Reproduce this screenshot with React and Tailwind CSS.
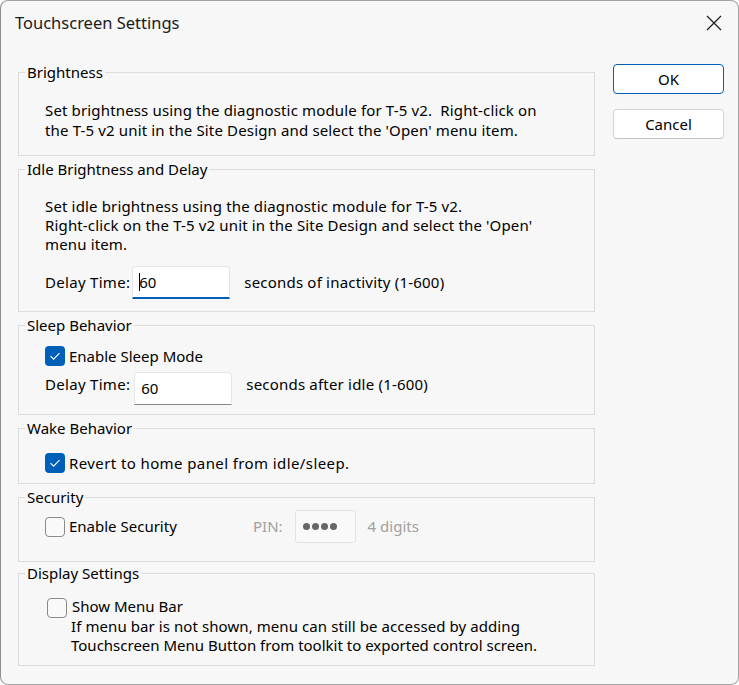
function Check({ checked, className = '' }) {
  if (checked) {
    return (
      <div className={`w-[20px] h-[20px] rounded-[4px] bg-[#005fb8] flex items-center justify-center shrink-0 ${className}`}>
        <svg width="20" height="20" viewBox="0 0 20 20">
          <path d="M5.5 10.2 L8.6 13.2 L14.5 7.2" fill="none" stroke="white" strokeWidth="1.1" />
        </svg>
      </div>
    )
  }
  return <div className={`w-[20px] h-[20px] rounded-[4px] border border-[#8a8a8a] bg-[#f9f9f9] shrink-0 ${className}`} />
}

function Group({ title, className = '', children }) {
  return (
    <fieldset className={`border border-[#dcdcdc] min-w-0 ${className}`}>
      <legend className="ml-[6px] px-[2px] leading-[20px]">{title}</legend>
      {children}
    </fieldset>
  )
}

function Field({ value, focused, className = '' }) {
  return (
    <div
      className={`h-[33px] bg-white border border-[#e5e5e5] rounded-t-[4px] flex items-center pl-[6px] leading-[20px] ${
        focused ? 'border-b-2 border-b-[#005fb8]' : 'border-b border-b-[#868686]'
      } ${className}`}
    >
      {focused && <span className="w-px h-[18px] bg-black -mr-px" />}
      {value}
    </div>
  )
}

export default function App() {
  return (
    <div className="w-[739px] h-[685px] bg-white font-['Noto_Sans',sans-serif] text-[15px] text-black">
      <div className="h-full rounded-[8px] border border-[#a3a3a3] border-l-[#8f8f8f] bg-[#f7f7f7] flex flex-col overflow-hidden">
        {/* title bar */}
        <div className="h-[44px] flex items-center justify-between pl-[14px] pr-[16px] text-[#1b1b1b]">
          <span className="text-[16.5px]">Touchscreen Settings</span>
          <svg width="16" height="16" viewBox="0 0 16 16">
            <path d="M1 1 L15 15 M15 1 L1 15" stroke="#1b1b1b" strokeWidth="1.2" />
          </svg>
        </div>

        <div className="flex pl-[17px]">
          <div className="w-[577px] flex flex-col">
            <Group title="Brightness" className="mt-[17px] h-[94px]">
              <div className="mt-[18px] pl-[26px] leading-[20px] whitespace-pre tracking-[0.15px]">
                <div>Set brightness using the diagnostic module for T-5 v2.  Right-click on</div>
                <div>the T-5 v2 unit in the Site Design and select the 'Open' menu item.</div>
              </div>
            </Group>

            <Group title="Idle Brightness and Delay" className="mt-[3px] h-[153px]">
              <div className="mt-[18px] pl-[26px] leading-[19px] whitespace-pre tracking-[0.15px]">
                <div>Set idle brightness using the diagnostic module for T-5 v2.</div>
                <div>Right-click on the T-5 v2 unit in the Site Design and select the 'Open'</div>
                <div>menu item.</div>
              </div>
              <div className="mt-[12px] pl-[26px] flex items-center">
                <span className="tracking-[0.3px]">Delay Time:</span>
                <Field value="60" focused className="ml-[2px] w-[98px]" />
                <span className="ml-[14px] tracking-[0.2px]">seconds of inactivity (1-600)</span>
              </div>
            </Group>

            <Group title="Sleep Behavior" className="mt-[3px] h-[100px]">
              <div className="mt-[10px] pl-[26px] flex items-center">
                <Check checked />
                <span className="ml-[4px]">Enable Sleep Mode</span>
              </div>
              <div className="mt-[4px] pl-[26px] flex items-center">
                <span className="mb-[8px] tracking-[0.3px]">Delay Time:</span>
                <Field value="60" className="ml-[4px] w-[98px] h-[32px]" />
                <span className="ml-[14px] mb-[8px] tracking-[0.2px]">seconds after idle (1-600)</span>
              </div>
            </Group>

            <Group title="Wake Behavior" className="mt-[3px] h-[66px]">
              <div className="mt-[14px] pl-[26px] flex items-center">
                <Check checked />
                <span className="ml-[4px] tracking-[0.4px]">Revert to home panel from idle/sleep.</span>
              </div>
            </Group>

            <Group title="Security" className="mt-[3px] h-[75px]">
              <div className="mt-[3px] pl-[26px] flex items-center">
                <Check />
                <span className="ml-[4px] w-[184px]">Enable Security</span>
                <span className="text-[#a0a0a0]">PIN:</span>
                <div className="ml-[12px] w-[61px] h-[33px] bg-[#f9f9f9] border border-[#e3e3e3] rounded-[3px] flex items-center gap-[2px] pl-[7px]">
                  <span className="w-[7px] h-[7px] rounded-full bg-[#666]" />
                  <span className="w-[7px] h-[7px] rounded-full bg-[#666]" />
                  <span className="w-[7px] h-[7px] rounded-full bg-[#666]" />
                  <span className="w-[7px] h-[7px] rounded-full bg-[#666]" />
                </div>
                <span className="ml-[12px] text-[#a0a0a0]">4 digits</span>
              </div>
            </Group>

            <Group title="Display Settings" className="mt-[1px] h-[103px]">
              <div className="mt-[15px] pl-[28px] flex items-start h-[20px]">
                <Check />
                <span className="ml-[5px] leading-[20px] -mt-[2px]">Show Menu Bar</span>
              </div>
              <div className="-mt-[1px] pl-[52px] leading-[19px] whitespace-pre">
                <div className="tracking-[0.08px]">If menu bar is not shown, menu can still be accessed by adding</div>
                <div>Touchscreen Menu Button from toolkit to exported control screen.</div>
              </div>
            </Group>
          </div>

          {/* dialog buttons */}
          <div className="ml-[18px] w-[111px] flex flex-col">
            <button className="mt-[19px] h-[30px] bg-white border border-[#005fb8] rounded-[4px]">OK</button>
            <button className="mt-[15px] h-[30px] bg-white border border-[#d5d5d5] border-b-[#c2c2c2] rounded-[4px]">Cancel</button>
          </div>
        </div>
      </div>
    </div>
  )
}
